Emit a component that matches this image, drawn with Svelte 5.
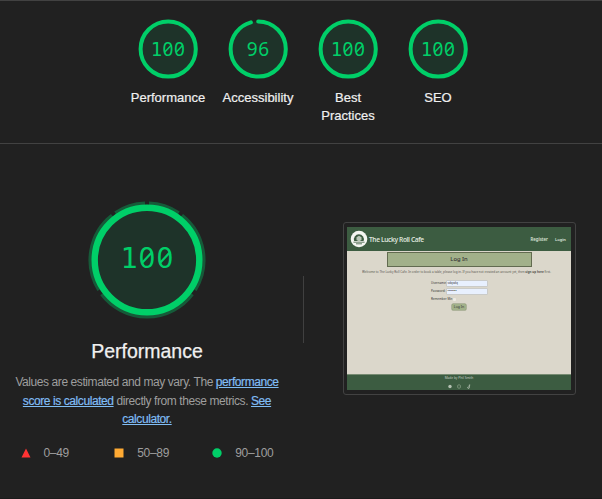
<script>
  const gauges = [
    { score: '100', label: 'Performance', arc: 100 },
    { score: '96', label: 'Accessibility', arc: 95.7 },
    { score: '100', label: 'Best Practices', arc: 100 },
    { score: '100', label: 'SEO', arc: 100 }
  ];
  const overall = '100';
  // Weighted metric segments around the main gauge, in degrees clockwise from the top
  const segments = [[2, 34], [38, 122], [127, 233], [238, 322], [326, 358]];
  const point = (deg, r) => {
    const a = (deg - 90) * Math.PI / 180;
    return `${60 + r * Math.cos(a)} ${60 + r * Math.sin(a)}`;
  };
  const arcPath = ([a, b]) => `M${point(a, 56.3)} A56.3 56.3 0 ${b - a > 180 ? 1 : 0} 1 ${point(b, 56.3)}`;

  const digitX = (score, i, cx, pitch) => cx + (i - (score.length - 1) / 2) * pitch;
  // One slash across the counter of each zero in the score
  const slashes = (score, cx, base, size, pitch) => score.split('').map((d, i) => {
    if (d !== '0') return '';
    const x = digitX(score, i, cx, pitch);
    return `M${x - size * 0.18} ${base - size * 0.17}L${x + size * 0.18} ${base - size * 0.55}`;
  }).join('') || 'M0 0';
</script>

<main>
  <header>
    {#each gauges as g}
      <div class="gauge">
        <svg class="small" width="60" height="60" viewBox="0 0 60 60">
          <circle cx="30.2" cy="30" r="27.6" fill="#1e3329" />
          <circle cx="30.2" cy="30" r="27.6" fill="none" stroke="#00cf68" stroke-width="4" stroke-linecap="round"
            pathLength="100" stroke-dasharray={g.arc === 100 ? 'none' : `${g.arc} 100`} transform="rotate(-90 30.2 30)" />
          {#each g.score.split('') as d, i}
            <text class="digit" class:one={d === '1'} x={digitX(g.score, i, 30, 11.5)} y="36.5">{d}</text>
          {/each}
          <path d={slashes(g.score, 30, 36.5, 19, 11.5)} fill="none" stroke="#00cf68" stroke-width="1.5" />
        </svg>
        <span>{g.label}</span>
      </div>
    {/each}
  </header>

  <section>
    <div class="summary">
      <svg class="big" width="120" height="120" viewBox="0 0 120 120">
        {#each segments as s}
          <path d={arcPath(s)} fill="none" stroke="#165a39" stroke-width="4.4" />
        {/each}
        <circle cx="60" cy="60" r="52.3" fill="#1e3329" stroke="#00cf68" stroke-width="6.4" />
        {#each overall.split('') as d, i}
          <text class="digit" class:one={d === '1'} x={digitX(overall, i, 60, 18)} y="67.8">{d}</text>
        {/each}
        <path d={slashes(overall, 60, 67.8, 28.5, 18)} fill="none" stroke="#00cf68" stroke-width="2.2" />
      </svg>
      <h1>Performance</h1>
      <p>Values are estimated and may vary. The <a href="#perf">performance<br />score is calculated</a> directly from these metrics. <a href="#calc">See<br />calculator.</a></p>
      <div class="legend">
        <span><svg width="10" height="10"><path d="M5 0.5 9.5 9.5H.5z" fill="#f33" /></svg>0–49</span>
        <span class="mid"><svg width="10" height="10"><path d="M.5.5h9v9h-9z" fill="#fa3" /></svg>50–89</span>
        <span><svg width="10" height="10"><circle cx="5" cy="5" r="4.7" fill="#00cf68" /></svg>90–100</span>
      </div>
    </div>
    <div class="divider"></div>
    <div class="frame">
      <div class="site">
        <nav>
          <svg width="18" height="18" viewBox="0 0 18 18">
            <circle cx="9" cy="9" r="8.3" fill="#f4f6f2" />
            <path d="M4.2 11a5 5 0 1 1 9.4 0z" fill="#3c5c41" />
            <path d="m9 5.8 2.5 1.5v2.8L9 11.5l-2.5-1.4V7.3z" fill="#b9c7b8" />
            <path d="M3.4 12.2h11.2M6 13.8h6" stroke="#3c5c41" stroke-width=".8" />
          </svg>
          <b>The Lucky Roll Cafe</b>
          <span class="reg">Register</span><span class="login">Login</span>
        </nav>
        <div class="banner">Log In</div>
        <div class="welcome">
          <svg width="190" height="5"><text x="0" y="3.7" textLength="189" lengthAdjust="spacingAndGlyphs">Welcome to The Lucky Roll Cafe. In order to book a table, please log in. If you have not created an account yet, then <tspan font-weight="700">sign up here</tspan> first.</text></svg>
        </div>
        <form>
          <div class="row"><label for="u">Username:</label><div class="field" id="u">sdqsdq</div></div>
          <div class="row"><label for="p">Password:</label><div class="field" id="p">••••••••</div></div>
          <div class="row"><span class="remember">Remember Me:</span><i></i></div>
          <div class="submit">Log In</div>
        </form>
        <footer>
          <div>Made by Phil Smith</div>
          <svg width="24" height="5" viewBox="0 0 24 5">
            <circle cx="3" cy="2.5" r="1.7" fill="#b4c1b2" />
            <rect x="10.7" y=".9" width="2.7" height="3.2" rx=".8" fill="none" stroke="#93a991" stroke-width=".7" />
            <path d="M22.3.8v2.7a.8.8 0 1 1-.8-.7M22.3 1h.9" fill="none" stroke="#b4c1b2" stroke-width=".9" />
          </svg>
        </footer>
      </div>
    </div>
  </section>
</main>

<style>
  :global(body) { background: #212121; }
  main {
    width: 602px; height: 499px; box-sizing: border-box; overflow: hidden;
    background: #212121; color: #f0f0f0; border-top: 1px solid #424242; border-bottom: 1px solid #1b1b1b;
    font-family: "Liberation Sans", Arial, sans-serif;
  }
  header {
    display: flex; justify-content: center; height: 143px; box-sizing: border-box;
    padding: 18px 0 0 4px; border-bottom: 1px solid #424242;
  }
  .gauge { width: 90px; display: flex; flex-direction: column; align-items: center; font-size: 13px; line-height: 18px; text-align: center; }
  .gauge span { margin-top: 10px; max-width: 76px; -webkit-text-stroke: .2px #f0f0f0; }
  svg { display: block; flex: none; }
  .digit { fill: #00cf68; text-anchor: middle; font-family: "Noto Sans", sans-serif; }
  .digit.one { font-family: "DejaVu Sans Mono", monospace; }
  .small .digit { font-size: 19px; }
  .big .digit { font-size: 28.5px; }
  section { display: flex; height: 354px; }
  .summary { width: 294px; display: flex; flex-direction: column; align-items: center; padding-top: 56px; }
  h1 { margin: 18px 0 0; font-size: 19.5px; line-height: 26px; font-weight: 400; -webkit-text-stroke: .25px #f0f0f0; }
  p { margin: 9px 0 0; color: #9e9e9e; font-size: 12px; letter-spacing: -.42px; line-height: 18.5px; text-align: center; white-space: nowrap; }
  a { color: #80bdf5; text-decoration: underline; -webkit-text-stroke: .2px #80bdf5; }
  .legend { width: 253px; display: flex; justify-content: space-between; margin-top: 16px; color: #9e9e9e; font-size: 12px; letter-spacing: -.3px; line-height: 16px; }
  .legend span { display: flex; align-items: center; gap: 13px; }
  .legend .mid { padding-left: 2px; }
  .divider { width: 1px; height: 67px; background: #404040; margin: 132px 39px 0 9px; }
  .frame { width: 233px; height: 173px; box-sizing: border-box; border: 1px solid #424242; border-radius: 3px; padding: 4px 4px 4px 3px; margin-top: 78px; }
  .site { width: 224px; height: 163px; background: #dbd7cb; display: flex; flex-direction: column; align-items: center; font-family: "Noto Sans", sans-serif; color: #333; overflow: hidden; }
  nav { width: 224px; height: 24px; box-sizing: border-box; padding: 0 5px 0 3px; background: #3c5c41; color: #dce3da; display: flex; align-items: center; flex: none; font-size: 4.3px; font-weight: 600; }
  nav b { font-size: 6.6px; font-weight: 600; letter-spacing: -.38px; margin-left: 1px; white-space: nowrap; }
  .reg { margin: 0 7px 0 auto; }
  .login { font-size: 4.1px; }
  .banner { width: 145px; height: 15px; box-sizing: border-box; border: 1px solid #626b50; background: #a2b18a; margin-top: 1px; font-size: 5.8px; font-weight: 500; line-height: 13px; text-align: center; flex: none; }
  .welcome { margin: 2px 5px 0 0; height: 5px; }
  .welcome text { font-size: 3px; fill: #55534e; }
  form { width: 56px; margin-top: 5px; display: flex; flex-direction: column; font-size: 3px; }
  .row { display: flex; height: 8.2px; align-items: center; }
  .row label { width: 15.5px; }
  .field { width: 40px; height: 5px; background: #e8f0fe; box-shadow: 0 0 0 .5px #b9c0c8; padding-left: 1px; box-sizing: border-box; line-height: 5px; white-space: nowrap; }
  .remember { width: 22px; white-space: nowrap; }
  i { width: 3px; height: 3px; border-radius: 1px; background: #edeae2; }
  .submit { width: 14px; height: 6px; margin-left: 21px; border-radius: 1px; background: #a2b18a; box-shadow: 0 0 0 .5px #82906c; line-height: 6px; text-align: center; font-size: 3.5px; }
  footer { width: 224px; height: 16px; box-sizing: border-box; margin-top: auto; background: #3c5c41; border-top: 1px solid #778b72; color: #c6d0c4; font-size: 3.2px; line-height: 5px; display: flex; flex-direction: column; align-items: center; padding-top: 1px; gap: 3px; }
</style>
